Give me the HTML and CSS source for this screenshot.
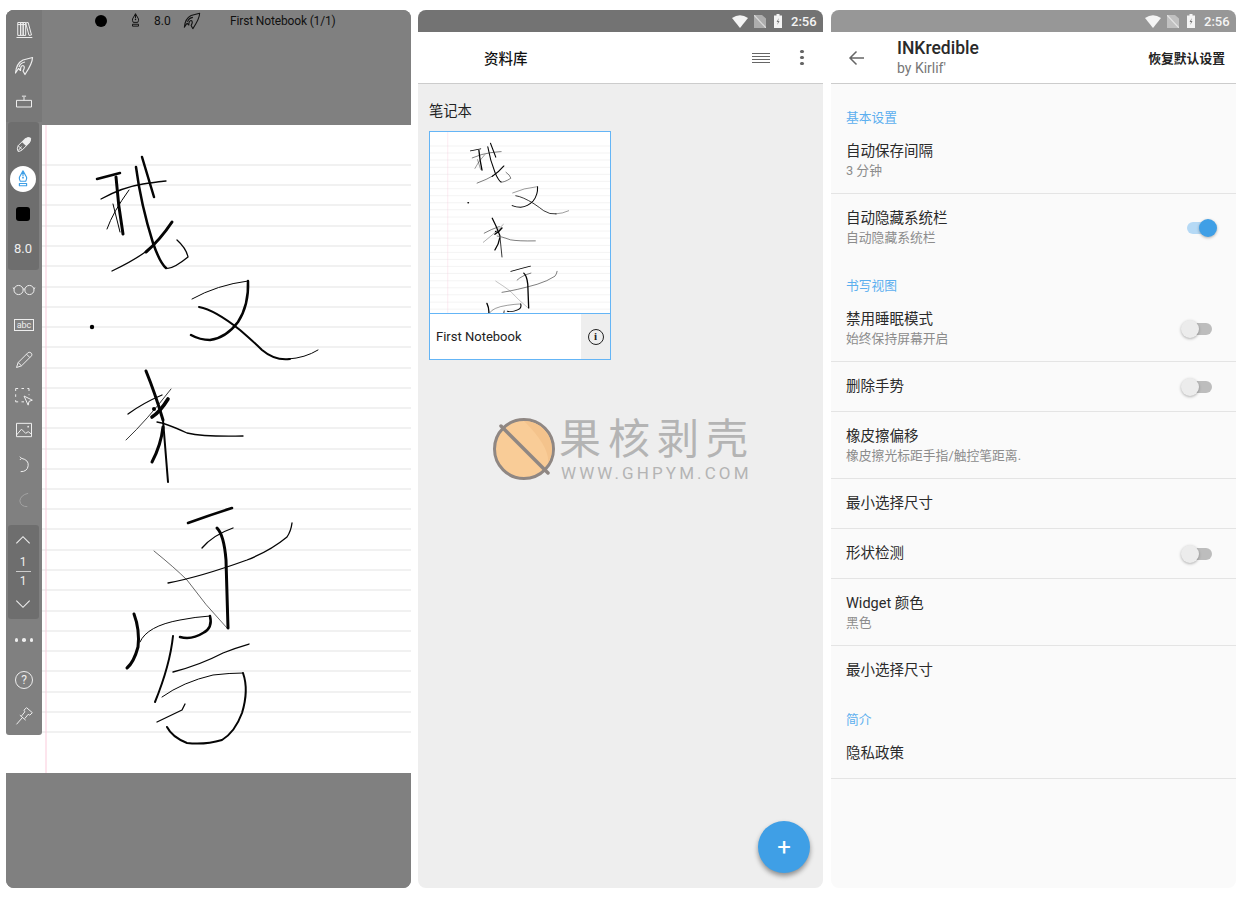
FILE: index.html
```html
<!DOCTYPE html>
<html lang="zh">
<head>
<meta charset="utf-8">
<title>INKredible</title>
<link rel="stylesheet" href="styles.css">
</head>
<body>
<svg class="defs" width="0" height="0" aria-hidden="true">
  <defs>
    <symbol id="i-pen" viewBox="0 0 20 20"><path d="M10 1 L14 8 Q14.5 10 13 12.5 L7 12.5 Q5.5 10 6 8 Z M10 1 V7 M6 15 H14 V17.5 H6 Z" fill="none" stroke="currentColor" stroke-width="1.3" stroke-linejoin="round"/><circle cx="10" cy="8.5" r="1" fill="currentColor"/></symbol>
    <symbol id="i-hand" viewBox="0 0 20 20"><path d="M1.5 17 C2 11 4 6.500 9 4 L18.500 1.500 C18.500 6 16 11 11 18.500 L9 15 C10.500 12.500 11 10 9 9.500 C7 9.500 6.500 12 6.500 14.500 L4.500 12.500 Z M5 11 C6 8 8 6.500 11 6" fill="none" stroke="currentColor" stroke-width="1.200" stroke-linejoin="round"/></symbol>
    <symbol id="i-wifi" viewBox="0 0 16 13"><path d="M0 3 Q8 -2.500 16 3 L8 13 Z" fill="currentColor"/></symbol>
    <symbol id="i-sim" viewBox="0 0 12 13"><path d="M0 0 H8 L12 3.500 V13 H0 Z" fill="currentColor" opacity=".45"/><path d="M0 0 L12 13" stroke="#fff" stroke-opacity=".55" stroke-width="1.200"/></symbol>
    <symbol id="i-batt" viewBox="0 0 8 14"><path d="M2.500 0 H5.500 V1.500 H8 V14 H0 V1.500 H2.500 Z" fill="currentColor"/><path d="M4.800 4 L2.600 8 H4 L3.300 11 L5.500 7 H4.100 Z" fill="#777"/></symbol>
    <g id="ink">
      <path class="rule" d="M6 165H411M6 185H411M6 205H411M6 226H411M6 246H411M6 266H411M6 287H411M6 307H411M6 327H411M6 347H411M6 368H411M6 388H411M6 408H411M6 428H411M6 449H411M6 469H411M6 489H411M6 509H411M6 529H411M6 550H411M6 570H411M6 590H411M6 611H411M6 631H411M6 651H411M6 671H411M6 692H411M6 712H411M6 732H411"/>
      <path class="margin" d="M46 125V773"/>
      <path class="w25" d="M97 179 L120 173"/>
      <path class="w3" d="M116 177 Q118 205 123 234"/>
      <path class="w12" d="M101 199 Q123 187 143 184 T166 181"/>
      <path class="w09" d="M107 229 Q113 212 129 190"/>
      <path class="w09" d="M113 204 L120 232"/>
      <path class="w25" d="M136 167 Q141 205 153 243 Q160 263 166 268"/>
      <path class="w12" d="M166 268 Q172 270 188 257 Q186 248 177 240"/>
      <path class="w25" d="M142 157 L154 197"/>
      <path class="w3" d="M172 222 Q160 240 146 252"/>
      <path class="w12" d="M148 250 Q135 260 112 271"/>
      <path class="w09" d="M192 299 Q217 285 248 281"/>
      <path class="w25" d="M248 281 Q249 305 238 322 Q226 338 210 340 Q200 340 191 335"/>
      <path class="w2" d="M199 307 Q215 310 240 330 Q255 343 262 350 Q275 361 290 359"/>
      <path class="w09" d="M288 359 Q305 358 318 350"/>
      <circle cx="92" cy="327" r="2.200"/>
      <path class="w3" d="M146 371 Q155 393 163 420"/>
      <path class="w2" d="M163 420 L168 482"/>
      <path class="w12" d="M128 414 Q143 403 162 395"/>
      <path class="w07" d="M126 440 Q147 420 171 389"/>
      <path class="w35" d="M152 417 Q160 412 168 399"/>
      <circle cx="154" cy="409" r="2"/>
      <path class="w12" d="M157 422 Q165 423 187 433 Q205 437 243 436"/>
      <path class="w3" d="M163 427 Q161 445 152 462"/>
      <path class="w25" d="M188 523 Q210 515 232 508"/>
      <path class="w3" d="M217 528 Q224 535 226 560 L228 628"/>
      <path class="w12" d="M202 548 Q213 535 233 528"/>
      <path class="w12" d="M168 583 Q200 577 247 560 Q270 551 287 537 Q291 531 292 523"/>
      <path class="w05" d="M154 551 Q175 568 187 580 Q205 605 227 628"/>
      <path class="w3" d="M134 614 Q140 630 138 647 Q134 662 127 668"/>
      <path class="w09" d="M140 642 Q147 626 180 620 Q195 617 210 616"/>
      <path class="w25" d="M210 616 Q213 628 203 633 Q192 640 180 637"/>
      <path class="w2" d="M173 636 Q170 665 155 702"/>
      <path class="w12" d="M173 672 Q200 665 223 653 Q235 648 249 644"/>
      <path class="w09" d="M162 697 Q183 682 213 675 Q230 673 243 673"/>
      <path class="w2" d="M243 673 Q249 690 242 713 Q235 732 222 740 Q205 745 187 743 Q172 737 167 727"/>
      <path class="w12" d="M157 722 L182 710 L185 704"/>
    </g>
  </defs>
</svg>

<main class="screens">

  <section class="phone phone-note">
    <header class="note-head">
      <span class="dot"></span>
      <svg class="ico note-pen"><use href="#i-pen"/></svg>
      <span class="note-size">8.0</span>
      <svg class="ico note-hand"><use href="#i-hand"/></svg>
      <span class="note-title">First Notebook (1/1)</span>
    </header>
    <svg class="paper" viewBox="6 125 405 648" preserveAspectRatio="none"><use href="#ink"/></svg>
    <div class="note-foot"></div>

    <nav class="toolbar">
      <div class="tool-top">
        <div class="tool"><svg viewBox="0 0 24 24"><path d="M3 21 H22 M4.500 3 H8 V18.500 H4.500 Z M8 3 H11 V18.500 H8 Z M11 3 H14 V18.500 H11 Z M14 3.500 L17 3 L21 18 L18 18.500 Z M4.500 5.500 H14" /></svg></div>
        <div class="tool"><svg viewBox="0 0 20 20"><use href="#i-hand"/></svg></div>
        <div class="tool"><svg viewBox="0 0 24 24"><path d="M3 10 H21 V18 H3 Z M12 10 V6 M9.500 5 H14.500"/></svg></div>
      </div>
      <div class="tool-panel panel-a">
        <div class="tool"><svg viewBox="0 0 24 24"><path d="M5 21 Q3 18 5 14 L13 6 Q17 3 20 5 Q20 9 18 11 L10 19 Q7 21 5 21 Z M5 14 L10 19 M5 20 L9 15"/><path class="solid" d="M9.500 9.500 L13 6 Q17 3 20 5 Q20 9 18 11 L14.500 14.500 Z"/></svg></div>
        <div class="tool"><span class="pen-on"><svg class="pen-blue"><use href="#i-pen"/></svg></span></div>
        <div class="tool"><span class="swatch"></span></div>
        <div class="tool tool-num">8.0</div>
      </div>
      <div class="tool-mid">
        <div class="tool"><svg viewBox="0 0 28 24"><circle cx="7.500" cy="12" r="5.500"/><circle cx="20.500" cy="12" r="5.500"/><path d="M13 11 Q14 10 15 11 M2 11 L1 9 M26 11 L27 9"/></svg></div>
        <div class="tool"><span class="abc">abc</span></div>
        <div class="tool"><svg viewBox="0 0 24 24"><path d="M3 21 L5 15 L17 3 Q19 2 21 4 Q22 6 21 7 L9 19 Z M5 15 L9 19 M15 5 L19 9"/></svg></div>
        <div class="tool tool-low"><svg viewBox="0 0 24 24"><path d="M2 6 V3 H5 M9 3 H12 M16 3 H18 V6 M18 10 V11 M2 10 V13 M2 17 V19 H5 M9 19 H12"/><path d="M12 12 L22 17 L18 18.500 L17 23 Z"/></svg></div>
        <div class="tool"><svg viewBox="0 0 24 24"><path d="M3 4 H21 V20 H3 Z M3 18 L9 11 L14 16 L17 14 L21 17"/><circle class="solid" cx="17" cy="8" r="1"/></svg></div>
        <div class="tool"><svg viewBox="0 0 24 24"><path d="M9 4 Q18 6 17 13 Q16 20 8 20 M9 4 L7 6 M9 4 L7 2"/></svg></div>
        <div class="tool tool-dim"><svg viewBox="0 0 24 24"><path d="M17 4 Q8 6 7 13 Q8 20 16 20"/></svg></div>
      </div>
      <div class="tool-panel panel-b">
        <div class="page-btn"><svg viewBox="0 0 24 16"><path d="M4 12 L12 4 L20 12"/></svg></div>
        <div class="page-frac"><span>1</span><span class="page-bar"></span><span>1</span></div>
        <div class="page-btn"><svg viewBox="0 0 24 16"><path d="M4 4 L12 12 L20 4"/></svg></div>
      </div>
      <div class="tool-end">
        <div class="tool tool-dots"><i></i><i></i><i></i></div>
        <div class="tool tool-help"><span class="help">?</span></div>
        <div class="tool"><svg viewBox="0 0 24 24"><path d="M3 22 L10 14 M7 11 L14 17 M9 12 L13 7 L12 5 L15 2 L22 8 L19 11 L17 10 L13 15"/></svg></div>
      </div>
    </nav>
  </section>

  <section class="phone phone-lib">
    <div class="status status-dark">
      <svg class="st-wifi"><use href="#i-wifi"/></svg>
      <svg class="st-sim"><use href="#i-sim"/></svg>
      <svg class="st-batt"><use href="#i-batt"/></svg>
      <span class="st-time">2:56</span>
    </div>
    <header class="lib-bar">
      <h1 class="lib-title">资料库</h1>
      <span class="list-ico"><i></i><i></i><i></i><i></i></span>
      <span class="more-ico"><i></i><i></i><i></i></span>
    </header>
    <div class="lib-body">
      <h2 class="lib-label">笔记本</h2>
      <article class="card">
        <svg class="thumb" viewBox="6 125 405 517" preserveAspectRatio="none"><use href="#ink"/></svg>
        <div class="card-foot">
          <span class="card-name">First Notebook</span>
          <span class="card-info"><span class="info-ico">i</span></span>
        </div>
      </article>
    </div>
    <div class="watermark">
      <svg class="wm-logo" viewBox="0 0 64 64"><circle cx="32" cy="32" r="29.500" class="wm-disc"/><path class="wm-shade" d="M32 4 A28 28 0 0 1 56 46 Q58 30 32 4Z"/><path class="wm-line" d="M9 9 L56 56"/></svg>
      <div class="wm-text">
        <div class="wm-cn">果核剥壳</div>
        <div class="wm-en">WWW.GHPYM.COM</div>
      </div>
    </div>
    <button class="fab" type="button">+</button>
  </section>

  <section class="phone phone-set">
    <div class="status status-light">
      <svg class="st-wifi"><use href="#i-wifi"/></svg>
      <svg class="st-sim"><use href="#i-sim"/></svg>
      <svg class="st-batt"><use href="#i-batt"/></svg>
      <span class="st-time">2:56</span>
    </div>
    <header class="set-bar">
      <svg class="back" viewBox="0 0 18 18"><path d="M16 9 H2 M8.500 2.500 L2 9 L8.500 15.500"/></svg>
      <div class="set-head">
        <div class="set-title">INKredible</div>
        <div class="set-by">by Kirlif'</div>
      </div>
      <span class="set-reset">恢复默认设置</span>
    </header>
    <div class="set-list">
      <div class="sec sec-1">基本设置</div>
      <div class="row two line"><div class="row-text"><div class="r-t">自动保存间隔</div><div class="r-s">3 分钟</div></div></div>
      <div class="row two"><div class="row-text"><div class="r-t">自动隐藏系统栏</div><div class="r-s">自动隐藏系统栏</div></div><span class="sw on"></span></div>
      <div class="sec sec-2">书写视图</div>
      <div class="row two line"><div class="row-text"><div class="r-t">禁用睡眠模式</div><div class="r-s">始终保持屏幕开启</div></div><span class="sw"></span></div>
      <div class="row one line"><div class="row-text"><div class="r-t">删除手势</div></div><span class="sw"></span></div>
      <div class="row two line"><div class="row-text"><div class="r-t">橡皮擦偏移</div><div class="r-s">橡皮擦光标距手指/触控笔距离.</div></div></div>
      <div class="row one line"><div class="row-text"><div class="r-t">最小选择尺寸</div></div></div>
      <div class="row one line"><div class="row-text"><div class="r-t">形状检测</div></div><span class="sw"></span></div>
      <div class="row two line"><div class="row-text"><div class="r-t">Widget 颜色</div><div class="r-s">黑色</div></div></div>
      <div class="row one"><div class="row-text"><div class="r-t">最小选择尺寸</div></div></div>
      <div class="sec sec-3">简介</div>
      <div class="row one line"><div class="row-text"><div class="r-t">隐私政策</div></div></div>
    </div>
  </section>

</main>
</body>
</html>
```
FILE: styles.css
```css
* { box-sizing: border-box; }
html, body { margin: 0; padding: 0; background: #fff; }
body { font-family: Roboto, "Noto Sans CJK SC", sans-serif; color: #222; }
.defs { position: absolute; }
h1, h2 { margin: 0; font-weight: 400; }

.screens { display: flex; gap: 7px; padding: 10px 0 0 6px; width: 1245px; height: 899px; overflow: hidden; }
.phone { position: relative; width: 405px; height: 878px; border-radius: 8px; overflow: hidden; display: flex; flex-direction: column; flex: none; }
.phone-set { margin-left: 1px; background: #fafafa; }
.phone-lib { background: #eee; }

/* note screen */
.phone-note { background: #808080; }
.note-head { height: 115px; flex: none; background: #808080; display: flex; align-items: center; align-self: stretch; padding: 0 0 94px 89px; color: #111; font-size: 12px; }
.dot { width: 12px; height: 12px; border-radius: 50%; background: #000; }
.ico { width: 15px; height: 15px; color: #111; }
.note-pen { margin-left: 21px; }
.note-size { margin-left: 11px; width: 20px; }
.note-hand { width: 18px; height: 18px; margin-left: 9px; }
.note-title { margin-left: 29px; letter-spacing: -.15px; white-space: nowrap; }
.paper { width: 405px; height: 648px; display: block; background: #fff; flex: none; }
.note-foot { flex: 1; background: #808080; }
.rule { stroke: #e3e3e3; stroke-width: 1; fill: none; }
.margin { stroke: #fbcbdb; stroke-width: 1; fill: none; }
#ink path:not(.rule):not(.margin) { fill: none; stroke: #050505; stroke-linecap: round; stroke-linejoin: round; }
#ink circle { fill: #000; }
#ink .w05 { stroke-width: .6; stroke: #777; }
#ink .w07 { stroke-width: .8; }
#ink .w09 { stroke-width: 1; }
#ink .w12 { stroke-width: 1.3; }
#ink .w2 { stroke-width: 2; }
#ink .w25 { stroke-width: 2.5; }
#ink .w3 { stroke-width: 3; }
#ink .w35 { stroke-width: 3.6; }

.toolbar { position: absolute; left: 0; top: 0; width: 36px; height: 725px; background: #808080; border-radius: 8px 0 3px 3px; display: flex; flex-direction: column; color: #eee; }
.tool-top { height: 112px; padding-top: 2px; background: #787878; flex: none; }
.tool-panel { margin: 0 3px 0 2px; background: #6e6e6e; border-radius: 3px; flex: none; }
.panel-a { height: 148px; padding: 4px 0; }
.panel-b { height: 94px; }
.tool-mid { height: 255px; padding-top: 2.5px; flex: none; }
.tool-end { padding-top: 3px; flex: none; }
.tool { height: 36px; display: flex; align-items: center; justify-content: center; }
.tool-panel .tool, .tool-mid .tool { height: 35px; }
.tool svg { width: 20px; height: 20px; fill: none; stroke: #eee; stroke-width: 1.2; color: #eee; }
.tool svg.pen-blue { width: 18px; height: 18px; stroke: none; color: #3f9fe6; }
.tool svg .solid { fill: #eee; stroke: none; }
.tool-mid .tool:first-child svg { width: 26px; }
.pen-on { width: 26px; height: 26px; border-radius: 50%; background: #fff; display: flex; align-items: center; justify-content: center; margin-left: -1px; }
.swatch { width: 14px; height: 14px; border-radius: 3px; background: #000; margin-left: -1px; }
.tool-num { font-size: 13px; color: #eee; margin-left: -1px; }
.abc { width: 20px; height: 12px; border: 1px solid #eee; font-size: 9px; line-height: 10px; text-align: center; color: #eee; }
.tool-low svg { width: 20px; height: 22px; position: relative; top: 1px; }
.tool-dim svg { stroke: #a2a2a2; }
.page-btn { height: 30px; display: flex; align-items: center; justify-content: center; margin-left: -1px; }
.page-btn svg { width: 20px; height: 14px; fill: none; stroke: #eee; stroke-width: 1.3; }
.page-frac { height: 34px; display: flex; flex-direction: column; align-items: center; justify-content: center; font-size: 12px; line-height: 15px; color: #eee; margin-left: -1px; }
.page-bar { width: 15px; height: 1px; background: #ccc; margin: 1px 0 2px; }
.tool-dots { height: 36px; gap: 4px; }
.tool-dots i { width: 3.5px; height: 3.5px; border-radius: 50%; background: #eee; }
.tool-help { margin-top: 4px; }
.help { width: 18px; height: 18px; border: 1px solid #eee; border-radius: 50%; font-size: 12px; line-height: 16px; text-align: center; color: #eee; }

/* status bars */
.status { height: 22px; flex: none; display: flex; align-items: center; justify-content: flex-end; padding-right: 7px; color: #f4f4f4; }
.status-dark { background: #737373; }
.status-light { background: #979797; }
.st-wifi { width: 16px; height: 13px; }
.st-sim { width: 12px; height: 13px; margin-left: 6px; }
.st-batt { width: 8px; height: 14px; margin-left: 8px; }
.st-time { font-size: 13px; font-weight: 500; margin-left: 9px; width: 25px; }

/* library */
.lib-bar { height: 52px; flex: none; background: #fff; border-bottom: 1px solid #ccc; display: flex; align-items: center; padding-left: 66px; }
.lib-title { font-size: 14.500px; font-weight: 500; color: #111; width: 268px; }
.list-ico { width: 18px; display: flex; flex-direction: column; gap: 2px; }
.list-ico i { height: 1px; background: #666; }
.more-ico { display: flex; flex-direction: column; gap: 2.500px; margin-left: 30px; }
.more-ico i { width: 3.500px; height: 3.500px; border-radius: 50%; background: #666; }
.lib-body { flex: 1; padding: 16px 0 0 11px; }
.lib-label { font-size: 14.300px; line-height: 22px; color: #222; }
.card { width: 182px; height: 229px; margin-top: 9px; border: 1px solid #64b5f6; background: #fff; display: flex; flex-direction: column; }
.thumb { width: 180px; height: 181px; display: block; flex: none; }
.card-foot { flex: 1; border-top: 1px solid #64b5f6; display: flex; align-items: stretch; }
.card-name { flex: 1; font-size: 13px; line-height: 45px; padding-left: 6px; color: #222; }
.card-info { width: 29px; background: #eee; display: flex; align-items: center; justify-content: center; }
.info-ico { width: 16px; height: 16px; border: 1.500px solid #222; border-radius: 50%; font: 700 11px/13px "Liberation Serif", serif; text-align: center; color: #222; }

.watermark { position: absolute; left: 74px; top: 407px; display: flex; align-items: flex-start; }
.wm-logo { width: 64px; height: 64px; flex: none; }
.wm-disc { fill: #f9cc97; stroke: #8f8783; stroke-width: 3; }
.wm-shade { fill: #f4c38c; }
.wm-line { stroke: #8f8783; stroke-width: 3.500; stroke-linecap: round; fill: none; }
.wm-text { margin-left: 3px; color: #b4b4b4; }
.wm-cn { font-size: 42px; line-height: 46px; letter-spacing: 7px; white-space: nowrap; }
.wm-en { font-size: 17px; line-height: 20px; letter-spacing: 3.100px; margin: 0 0 0 2px; white-space: nowrap; }
.fab { position: absolute; left: 340px; top: 811px; width: 52px; height: 52px; border: 0; border-radius: 50%; background: #3f9fe6; color: #fff; font: 400 24px/50px Roboto, sans-serif; padding: 0; box-shadow: 0 3px 5px rgba(0,0,0,.4); }

/* settings */
.set-bar { height: 52px; flex: none; background: #fff; border-bottom: 1px solid #ccc; display: flex; align-items: center; padding-left: 17px; padding-right: 11px; }
.back { width: 18px; height: 18px; fill: none; stroke: #666; stroke-width: 1.500; flex: none; }
.set-head { margin-left: 31px; flex: 1; }
.set-title { font-size: 17.500px; font-weight: 500; line-height: 22px; color: #2a2a2a; }
.set-by { font-size: 14px; line-height: 19px; color: #777; }
.set-reset { font-size: 12.800px; font-weight: 700; color: #222; }
.sec { font-size: 12.750px; line-height: 18px; height: 18px; color: #5cafef; padding-left: 15px; box-sizing: content-box; }
.sec-1 { padding-top: 25px; }
.sec-2 { padding-top: 16px; }
.sec-3 { padding-top: 15px; }
.row { display: flex; align-items: flex-start; padding: 0 24px 0 15px; position: relative; }
.row.two { height: 67px; }
.row.one { height: 50px; }
.row.line { border-bottom: 1px solid #e4e4e4; }
.row-text { flex: 1; padding-top: 14px; }
.r-t { font-size: 14.500px; line-height: 22px; color: #2a2a2a; }
.r-s { font-size: 12.800px; line-height: 17px; color: #8c8c8c; margin-top: -1px; }
.sw { position: absolute; left: 356px; width: 25px; height: 12px; border-radius: 6px; background: #bdbdbd; }
.row.two .sw { top: 28px; }
.row.one .sw { top: 19px; }
.sw::after { content: ""; position: absolute; left: -6px; top: -3px; width: 18px; height: 18px; border-radius: 50%; background: #ececec; box-shadow: 0 1px 3px rgba(0,0,0,.3); }
.sw.on { background: #b5d9f5; }
.sw.on::after { left: 12px; background: #3f9fe6; }
```
